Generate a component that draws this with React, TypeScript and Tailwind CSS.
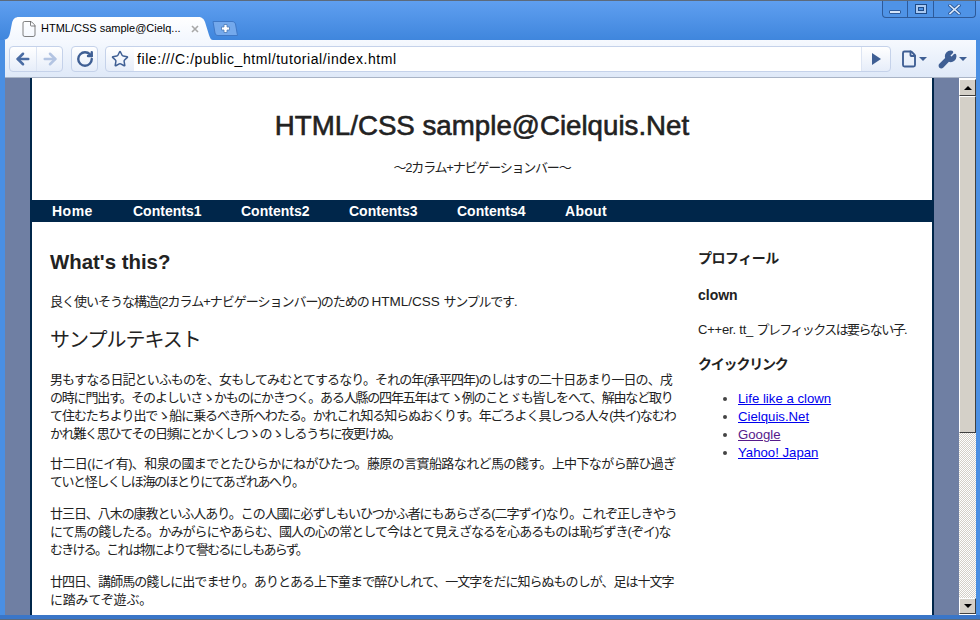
import React from 'react';
import { ArrowLeft, ArrowRight, RotateCw, Star, File, Wrench } from 'lucide-react';

const JP = "font-['Liberation_Sans','Noto_Sans_CJK_JP',sans-serif]";

const navItems = [
  { label: 'Home', width: 'w-[81px] tracking-[0.5px]' },
  { label: 'Contents1', width: 'w-[108px]' },
  { label: 'Contents2', width: 'w-[108px]' },
  { label: 'Contents3', width: 'w-[108px]' },
  { label: 'Contents4', width: 'w-[108px]' },
  { label: 'About', width: 'w-[60px] tracking-[0.3px]' },
];

const paragraphs = [
  [
    { text: '男もすなる日記といふものを、女もしてみむとてするなり。それの年(承平四年)のしはすの二十日あまり一日の、戌', track: 'tracking-[-0.92px]' },
    { text: 'の時に門出す。そのよしいさゝかものにかきつく。ある人縣の四年五年はてゝ例のことゞも皆しをへて、解由など取り', track: 'tracking-[-1.2px]' },
    { text: 'て住むたちより出でゝ船に乗るべき所へわたる。かれこれ知る知らぬおくりす。年ごろよく具しつる人々(共イ)なむわ', track: 'tracking-[-1.05px]' },
    { text: 'かれ難く思ひてその日頻にとかくしつゝのゝしるうちに夜更けぬ。', track: 'tracking-[-1.3px]' },
  ],
  [
    { text: '廿二日(にイ有)、和泉の國までとたひらかにねがひたつ。藤原の言實船路なれど馬の餞す。上中下ながら醉ひ過ぎ', track: 'tracking-[-0.6px]' },
    { text: 'ていと怪しくしほ海のほとりにてあざれあへり。', track: 'tracking-[-1.45px]' },
  ],
  [
    { text: '廿三日、八木の康教といふ人あり。この人國に必ずしもいひつかふ者にもあらざる(二字ずイ)なり。これぞ正しきやう', track: 'tracking-[-1.06px]' },
    { text: 'にて馬の餞したる。かみがらにやあらむ、國人の心の常として今はとて見えざなるを心あるものは恥ぢずき(ぞイ)な', track: 'tracking-[-0.95px]' },
    { text: 'むきける。これは物によりて譽むるにしもあらず。', track: 'tracking-[-1.75px]' },
  ],
  [
    { text: '廿四日、講師馬の餞しに出でませり。ありとある上下童まで醉ひしれて、一文字をだに知らぬものしが、足は十文字', track: 'tracking-[-0.97px]' },
    { text: 'に踏みてぞ遊ぶ。', track: 'tracking-[-0.2px]' },
  ],
];

function Scrollbar() {
  return (
    <div className="w-[17px] flex flex-col pt-[1px] pb-[1px] bg-white">
      <div className="h-[17px] flex items-center justify-center bg-[#d4d0c8] border border-t-white border-l-white border-r-[#404040] border-b-[#404040]">
        <div className="w-0 h-0 border-x-[4px] border-x-transparent border-b-[4px] border-b-black" />
      </div>
      <div className="h-[337px] bg-[#d4d0c8] border border-t-white border-l-white border-r-[#404040] border-b-[#404040]" />
      <div className="flex-1 bg-[repeating-conic-gradient(#d4d0c8_0%_25%,#ffffff_0%_50%)] bg-[length:2px_2px]" />
      <div className="h-[16px] flex items-center justify-center bg-[#d4d0c8] border border-t-white border-l-white border-r-[#404040] border-b-[#404040]">
        <div className="w-0 h-0 border-x-[4px] border-x-transparent border-t-[4px] border-t-black" />
      </div>
    </div>
  );
}

function TabShape() {
  return (
    <svg className="absolute inset-0" width="209" height="23" viewBox="0 0 209 23">
      <defs>
        <linearGradient id="tabfill" x1="0" y1="0" x2="0" y2="1">
          <stop offset="0" stopColor="#ffffff" />
          <stop offset="1" stopColor="#f3f7fe" />
        </linearGradient>
      </defs>
      <path d="M0 23 C4 22 5 20 6 16 L8 6 C9 2 11 0 15 0 L194 0 C198 0 200 2 201 5 L205 18 C206 21 207 23 209 23 Z" fill="url(#tabfill)" />
    </svg>
  );
}

function NewTab() {
  return (
    <svg width="26" height="15" viewBox="0 0 26 15" className="ml-[-1px] mb-[4px] shrink-0">
      <path d="M1 0.5 L20 0.5 C22 0.5 23 1.5 23.5 3 L25.5 14.5 L6 14.5 C4 14.5 3.5 13.5 3 12 Z" fill="#74a9ec" stroke="#3f78c6" />
      <path d="M12 3.5 h3 v2.5 h2.5 v3 h-2.5 v2.5 h-3 v-2.5 h-2.5 v-3 h2.5 z" fill="#ffffff" stroke="#4a78b5" strokeWidth="0.8" />
    </svg>
  );
}

function CloseGlyph() {
  return (
    <svg width="13" height="11" viewBox="0 0 13 11">
      <path d="M2 1.5 L11 9.5 M11 1.5 L2 9.5" stroke="#2d5a9a" strokeWidth="3.4" strokeLinecap="square" />
      <path d="M2 1.5 L11 9.5 M11 1.5 L2 9.5" stroke="#dbe9fb" strokeWidth="1.6" strokeLinecap="square" />
    </svg>
  );
}

export default function App() {
  return (
    <div className={`w-[980px] h-[620px] overflow-hidden flex flex-col bg-[#4a8fe3] ${JP}`}>
      {/* title bar + tabs */}
      <div className="h-[40px] relative flex items-end pl-[4px] bg-gradient-to-b from-[#5f9ff0] to-[#3f86dd] border-t border-t-[#5c6a7c]">
        <div className="relative h-[23px] w-[209px] shrink-0 text-[11px] text-black">
          <TabShape />
          <div className="relative h-full flex items-center pl-[16px] pr-[13px]">
            <File size={18} strokeWidth={1} className="text-[#555] shrink-0" />
            <span className="ml-[3px] flex-1 whitespace-nowrap">HTML/CSS sample@Cielq...</span>
            <svg width="10" height="10" viewBox="0 0 10 10" className="shrink-0">
              <path d="M2 2 L8 8 M8 2 L2 8" stroke="#a8a8a8" strokeWidth="1.6" />
            </svg>
          </div>
        </div>
        <NewTab />
        <div className="absolute right-[4px] top-0 w-[94px] h-[17px] flex rounded-b-[4px] border border-t-0 border-[#2d5a9a] bg-[#4f93e6]">
          <div className="w-[25px] flex items-center justify-center border-r border-[#2d5a9a]">
            <div className="w-[12px] h-[4px] mt-[5px] rounded-[1px] bg-[#d5e5fa] border border-[#2d5a9a]" />
          </div>
          <div className="w-[26px] flex items-center justify-center border-r border-[#2d5a9a]">
            <div className="w-[12px] h-[10px] flex items-center justify-center bg-[#a9c9f2] border border-[#1f4a85]">
              <div className="w-[6px] h-[4px] bg-[#4f93e6] border border-[#1f4a85]" />
            </div>
          </div>
          <div className="flex-1 flex items-center justify-center">
            <CloseGlyph />
          </div>
        </div>
      </div>

      {/* toolbar */}
      <div className="h-[38px] ml-[5px] mr-[4px] pt-[1px] flex items-center bg-gradient-to-b from-[#f6f9fe] to-[#dfe9f8] border-b border-b-[#a9b4c6]">
        <div className="ml-[4px] w-[54px] h-[26px] flex rounded-[4px] bg-gradient-to-b from-white to-[#e6edf9] border border-[#c5d2ea]">
          <div className="w-[27px] flex items-center justify-center border-r border-[#dde5f3]">
            <ArrowLeft size={18} strokeWidth={3.4} className="text-[#4a6ca3]" />
          </div>
          <div className="flex-1 flex items-center justify-center">
            <ArrowRight size={18} strokeWidth={3.4} className="text-[#b3c4e2]" />
          </div>
        </div>
        <div className="ml-[8px] w-[27px] h-[26px] flex items-center justify-center rounded-[4px] bg-gradient-to-b from-white to-[#e6edf9] border border-[#c5d2ea]">
          <RotateCw size={18} strokeWidth={3.2} className="text-[#3f5f94]" />
        </div>
        <div className="ml-[7px] w-[786px] h-[26px] flex items-center rounded-[4px] bg-gradient-to-b from-white to-[#e6edf9] border border-[#c5d2ea]">
          <div className="w-[28px] flex items-center justify-center">
            <Star size={18} strokeWidth={2} className="text-[#3f5f94]" />
          </div>
          <div className="w-[728px] h-full flex items-center pl-[3px] pt-[1px] bg-white border-r border-[#dde5f3] text-[14px] tracking-[0.57px] text-black whitespace-nowrap">
            file:///C:/public_html/tutorial/index.html
          </div>
          <div className="flex-1 flex items-center justify-center">
            <div className="w-0 h-0 border-y-[6px] border-y-transparent border-l-[9px] border-l-[#3f5f94]" />
          </div>
        </div>
        <div className="ml-[9px] flex items-center gap-[1px] text-[#3f5f94]">
          <File size={18} strokeWidth={2.5} />
          <div className="w-0 h-0 border-x-[4px] border-x-transparent border-t-[4px] border-t-[#3f5f94]" />
        </div>
        <div className="ml-[11px] flex items-center gap-[2px] text-[#3f5f94]">
          <Wrench size={19} strokeWidth={2.5} fill="currentColor" />
          <div className="w-0 h-0 border-x-[4px] border-x-transparent border-t-[4px] border-t-[#3f5f94]" />
        </div>
      </div>

      {/* viewport */}
      <div className="h-[537px] ml-[5px] mr-[4px] flex overflow-hidden">
        <div className="w-[954px] flex bg-[#6f7fa3] pl-[25px]">
          <div className="w-[904px] h-full overflow-hidden bg-white border-x-2 border-x-[#00264a] text-[#222]">
            <div className="h-[122px] pt-[30px] flex flex-col items-center">
              <h1 className="text-[27.7px] leading-[36px] font-normal text-[#222] [-webkit-text-stroke:0.6px_#222]">HTML/CSS sample@Cielquis.Net</h1>
              <p className="mt-[14px] text-[13px] leading-[20px] tracking-[-1.2px]">～2カラム+ナビゲーションバー～</p>
            </div>
            <nav className="h-[22px] flex items-center pl-[20px] pt-[1px] bg-[#00264a] text-white text-[14px] font-bold">
              {navItems.map(item => (
                <span key={item.label} className={item.width}>{item.label}</span>
              ))}
            </nav>
            <div className="flex pl-[18px] pt-[27px]">
              <main className="w-[648px] text-[13px] leading-[18px]">
                <h2 className="text-[20.4px] leading-[26px] font-bold text-[#222]">What's this?</h2>
                <p className="mt-[18px] whitespace-nowrap">
                  <span className="tracking-[-1px]">良く使いそうな構造(2カラム+ナビゲーションバー)のための </span>
                  <span className="text-[13.5px]">HTML/CSS </span>
                  <span className="tracking-[-1.2px]">サンプルです.</span>
                </p>
                <h3 className="mt-[15px] text-[20px] leading-[28px] font-normal tracking-[-1px]">サンプルテキスト</h3>
                {paragraphs.map((lines, i) => (
                  <p key={i} className={i === 0 ? 'mt-[17px]' : i === 1 ? 'mt-[12px]' : 'mt-[14px]'}>
                    {lines.map(line => (
                      <span key={line.text} className={`block whitespace-nowrap ${line.track}`}>{line.text}</span>
                    ))}
                  </p>
                ))}
              </main>
              <aside className="text-[13px] text-[#222]">
                <h3 className="text-[14px] leading-[18px] font-bold tracking-[-0.5px]">プロフィール</h3>
                <h4 className="mt-[19px] text-[14px] leading-[18px] font-bold">clown</h4>
                <p className="mt-[17px] leading-[18px] whitespace-nowrap">
                  <span className="tracking-[-0.2px]">C++er. tt_ </span>
                  <span className="tracking-[-1.6px]">プレフィックスは要らない子.</span>
                </p>
                <h3 className="mt-[16px] text-[14px] leading-[18px] font-bold tracking-[-1.2px]">クイックリンク</h3>
                <ul className="mt-[17px] ml-[40px] list-disc marker:text-[#444] leading-[18px] text-[13.2px]">
                  <li><a className="underline text-[#0000ee]" href="#a">Life like a clown</a></li>
                  <li><a className="underline text-[#0000ee]" href="#b">Cielquis.Net</a></li>
                  <li><a className="underline text-[#551a8b]" href="#c">Google</a></li>
                  <li><a className="underline text-[#0000ee]" href="#d">Yahoo! Japan</a></li>
                </ul>
              </aside>
            </div>
          </div>
        </div>
        <Scrollbar />
      </div>
      <div className="flex-1 bg-[#3a76c8] border-b border-b-[#5c6a7c]" />
    </div>
  );
}
